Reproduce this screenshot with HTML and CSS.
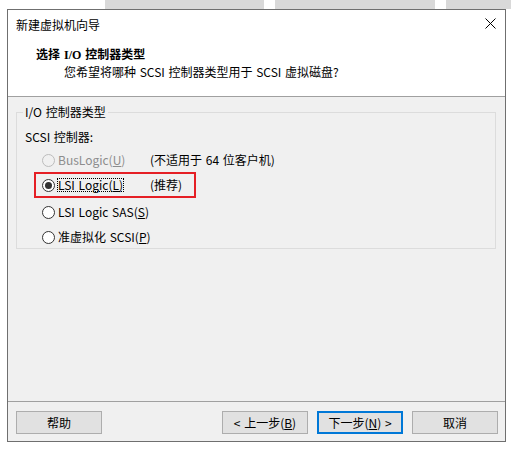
FILE: index.html
```html
<!DOCTYPE html>
<html lang="zh-CN">
<head>
<meta charset="utf-8">
<title>新建虚拟机向导</title>
<link rel="stylesheet" href="styles.css">
</head>
<body>
<div class="strip">
  <div class="blk blk1"></div>
  <div class="blk blk2"></div>
  <div class="blk blk3"></div>
</div>
<div class="window">
  <div class="header">
    <div class="titlebar">
      <span class="title">新建虚拟机向导</span>
      <svg class="close" width="11" height="11" viewBox="0 0 11 11"><path d="M0.5 0.5 L10.5 10.5 M10.5 0.5 L0.5 10.5" stroke="#000" stroke-width="1" fill="none"/></svg>
    </div>
    <div class="heading">选择 I/O 控制器类型</div>
    <div class="subtitle">您希望将哪种 SCSI 控制器类型用于 SCSI 虚拟磁盘?</div>
  </div>
  <div class="body">
    <fieldset class="group">
      <legend class="legend">I/O 控制器类型</legend>
      <div class="label">SCSI 控制器:</div>
      <div class="options">
        <div class="row disabled">
          <div class="c1"><span class="radio"></span><span class="txt">BusLogic(<u>U</u>)</span></div>
          <div class="c2">(不适用于 64 位客户机)</div>
        </div>
        <div class="row marked">
          <div class="c1"><span class="radio checked"></span><span class="txt focus">LSI Logic(<u>L</u>)</span></div>
          <div class="c2">(推荐)</div>
        </div>
        <div class="row row3">
          <div class="c1 wide"><span class="radio"></span><span class="txt">LSI Logic SAS(<u>S</u>)</span></div>
        </div>
        <div class="row">
          <div class="c1 wide"><span class="radio"></span><span class="txt">准虚拟化 SCSI(<u>P</u>)</span></div>
        </div>
      </div>
    </fieldset>
  </div>
  <div class="footer">
    <button class="btn">帮助</button>
    <div class="btns">
      <button class="btn">&lt; 上一步(<u>B</u>)</button>
      <button class="btn primary">下一步(<u>N</u>) &gt;</button>
      <button class="btn">取消</button>
    </div>
  </div>
</div>
</body>
</html>
```
FILE: styles.css
```css
* { box-sizing: border-box; }
html, body { margin: 0; padding: 0; background: #ffffff; }
body {
  width: 513px;
  height: 451px;
  overflow: hidden;
  font-family: "Noto Sans CJK SC", sans-serif;
  font-size: 12px;
  color: #000;
  word-spacing: 1px;
}
.strip { height: 9px; display: flex; }
.blk { height: 9px; background: #d9d9d9; }
.blk1 { margin-left: 105px; width: 159px; }
.blk2 { margin-left: 11px; width: 160px; }
.blk3 { margin-left: 11px; width: 65px; }

.window {
  margin-left: 7px;
  width: 499px;
  height: 433px;
  border: 1px solid #6f6f6f;
  display: flex;
  flex-direction: column;
  background: #f0f0f0;
}
.header {
  height: 87px;
  background: #ffffff;
  border-bottom: 1px solid #a0a0a0;
}
.titlebar {
  height: 28px;
  padding: 1px 9px 0 8px;
  display: flex;
  align-items: center;
  justify-content: space-between;
}
.title { line-height: 16px; }
.close { display: block; margin-top: -2px; }
.heading {
  margin-top: 9px;
  padding-left: 28px;
  line-height: 16px;
  font-weight: bold;
  font-family: "Liberation Serif", "Noto Sans CJK SC", serif;
  font-size: 12px;
}
.subtitle {
  margin-top: 1px;
  padding-left: 56px;
  line-height: 16px;
}
.body {
  height: 305px;
  border-bottom: 1px solid #a0a0a0;
  padding-top: 7px;
}
.group {
  margin: 0 9px 0 8px;
  padding: 0 0 1px 6px;
  border: 1px solid #dcdcdc;
  min-width: 0;
}
.legend {
  padding: 0 2px;
  line-height: 16px;
}
.label {
  margin: 9px 0 0 2px;
  line-height: 16px;
}
.options {
  margin: 5px 0 0 19px;
  display: flex;
  flex-direction: column;
  gap: 5px;
}
.row {
  display: flex;
  height: 20px;
  align-items: center;
}
.row3 { margin-top: 2px; }
.c1 { width: 108px; display: flex; align-items: center; }
.c1.wide { width: auto; }
.c2 { line-height: 16px; white-space: nowrap; }
.radio {
  width: 13px;
  height: 13px;
  border: 1px solid #333;
  border-radius: 50%;
  background: #fff;
  margin-right: 3px;
  flex: none;
  display: flex;
  align-items: center;
  justify-content: center;
}
.radio.checked::after {
  content: "";
  width: 7px;
  height: 7px;
  border-radius: 50%;
  background: #333;
}
.txt { line-height: 16px; white-space: nowrap; }
.disabled .radio { border-color: #bcbcbc; background: #f0f0f0; }
.disabled .txt { color: #8d8d8d; }
.focus {
  outline: 1px dotted #000;
  outline-offset: -1px;
  line-height: 14px;
  padding: 0 1px;
  margin-left: -1px;
}
.marked {
  width: 162px;
  height: 26px;
  border: 2px solid #e51f25;
  padding: 1px 0 1px 6px;
  margin: -3px 0 -3px -8px;
}
.footer {
  flex: 1;
  padding: 9px 7px 0 8px;
  display: flex;
  justify-content: space-between;
  align-items: flex-start;
}
.btns { display: flex; gap: 9px; }
.btn {
  width: 86px;
  height: 23px;
  background: #e1e1e1;
  border: 1px solid #adadad;
  font-family: "Noto Sans CJK SC", sans-serif;
  font-size: 12px;
  line-height: 16px;
  color: #000;
  padding: 0;
  margin: 0;
  word-spacing: 1px;
}
.btn.primary { border: 2px solid #0078d7; }
```
